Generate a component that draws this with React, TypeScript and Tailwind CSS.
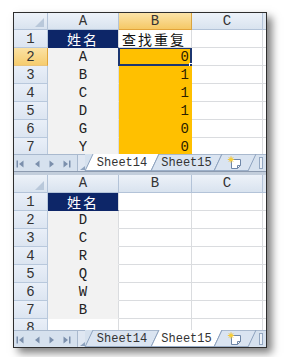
import React from "react";

const MONO = "font-['Liberation_Mono','DejaVu_Sans_Mono',monospace]";
const CJK = "font-['Noto_Sans_CJK_SC','Noto_Sans',sans-serif]";

type Kind = "navy" | "grey" | "orange" | "white";

type CellSpec = {
  kind: Kind;
  text?: string;
  align?: "center" | "left" | "right";
  cjk?: boolean;
  selected?: boolean;
};

const KIND: Record<Kind, string> = {
  navy: "bg-[#0d2668] text-white border-b-[#0d2668] border-r-[#dadcdf]",
  grey: "bg-[#f2f2f2] text-[#222] border-b-[#f2f2f2] border-r-[#dadcdf]",
  orange: "bg-[#ffc000] text-[#2a1e00] border-b-[#ffc000] border-r-[#ffc000]",
  white: "bg-white text-[#111] border-[#dadcdf]",
};

const ALIGN = {
  center: "justify-center",
  left: "justify-start pl-[3px]",
  right: "justify-end pr-[2px]",
};

const WIDTHS = ["w-[71px]", "w-[73px]", "w-[71px]"];

const ROW_H: Record<number, string> = {
  18: "h-[18px]",
  16: "h-[16px]",
  11: "h-[11px]",
};

function Cell({ spec, width }: { spec: CellSpec; width: string }) {
  const font = spec.cjk
    ? `${CJK} text-[14px] leading-[14px] tracking-[2px]`
    : `${MONO} text-[14px] leading-[16px]`;
  return (
    <div
      className={`relative flex h-full items-center border-r border-b ${width} ${KIND[spec.kind]} ${ALIGN[spec.align ?? "center"]} ${font}`}
    >
      {spec.text}
      {spec.selected && (
        <>
          <div className="absolute -left-[1px] -top-[1px] -right-[1px] -bottom-[1px] border-2 border-[#1c3670]" />
          <div className="absolute -right-[3px] -bottom-[3px] h-[5px] w-[5px] border border-white bg-[#1c3670]" />
        </>
      )}
    </div>
  );
}

function Row({ n, cells, h = 18, hl }: { n: number; cells: CellSpec[]; h?: number; hl?: boolean }) {
  return (
    <div className={`overflow-hidden ${ROW_H[h]}`}>
      <div className="flex h-[18px]">
        <div
          className={`flex w-[34px] items-center justify-center border-r border-b ${MONO} text-[14px] leading-[16px] text-[#333] ${
            hl
              ? "border-r-[#e0a63a] border-b-[#e9c47c] bg-[linear-gradient(#fbe2a4,#f6cc6e)]"
              : "border-[#b8c8dc] bg-[linear-gradient(#e9eff8,#dce5f1)]"
          }`}
        >
          {n}
        </div>
        {cells.map((c, i) => (
          <Cell key={i} spec={c} width={WIDTHS[i]} />
        ))}
        <div className="flex-1 border-b border-[#dadcdf] bg-white" />
      </div>
    </div>
  );
}

function HeaderRow({ selB, tall }: { selB?: boolean; tall?: boolean }) {
  const base = `flex items-center justify-center border-r border-b ${MONO} text-[14px] leading-[15px] text-[#333]`;
  const normal = "border-[#b3c3d8] bg-[linear-gradient(#edf2f9,#d9e3ef)]";
  const gold = "border-r-[#d9a440] border-b-[#e2a43a] bg-[linear-gradient(#fbe3a8,#f5c865)]";
  return (
    <div className={`flex ${tall ? "h-[18px]" : "h-[17px]"}`}>
      <div className={`relative w-[34px] ${base} ${normal}`}>
        <svg className="absolute bottom-[2px] right-[3px]" width="9" height="9" viewBox="0 0 9 9">
          <path d="M9 0V9H0Z" fill="#b9c8da" />
        </svg>
      </div>
      <div className={`w-[71px] ${base} ${normal}`}>A</div>
      <div className={`w-[73px] ${base} ${selB ? gold : normal}`}>B</div>
      <div className={`w-[71px] ${base} ${normal}`}>C</div>
      <div className={`flex-1 border-b border-[#b3c3d8] bg-[#dfe7f1]`} />
    </div>
  );
}

const NAV = "#7b8fac";

function NavIcons() {
  return (
    <div className="flex w-[63px] items-center border-t border-[#a9b9ce] pl-[2px] pt-[1px]">
      <svg width="8" height="8" viewBox="0 0 8 8">
        <rect x="0.5" y="0.5" width="1.5" height="7" fill={NAV} />
        <path d="M7.5 0.5v7L3 4z" fill={NAV} />
      </svg>
      <svg className="ml-[9px]" width="8" height="8" viewBox="0 0 8 8">
        <path d="M6.5 0.5v7L2 4z" fill={NAV} />
      </svg>
      <svg className="ml-[7px]" width="8" height="8" viewBox="0 0 8 8">
        <path d="M1.5 0.5v7L6 4z" fill={NAV} />
      </svg>
      <svg className="ml-[7px]" width="8" height="8" viewBox="0 0 8 8">
        <path d="M0.5 0.5v7L5 4z" fill={NAV} />
        <rect x="6" y="0.5" width="1.5" height="7" fill={NAV} />
      </svg>
    </div>
  );
}

const SLANT = 8;

function Tab({
  w,
  width,
  active,
  label,
  insert,
}: {
  w: number;
  width: string;
  active?: boolean;
  label?: string;
  insert?: boolean;
}) {
  const s = SLANT;
  return (
    <div className={`relative h-full ${width}`}>
      <svg className="absolute left-0 top-0 overflow-visible" width={w} height="17">
        <polygon points={`0,17 ${s},0 ${w + s},0 ${w},17`} fill={active ? "#ffffff" : "#dae4f1"} />
        {!active && <line x1={s} y1="0.5" x2={w + s} y2="0.5" stroke="#a9b9ce" />}
        <line x1="0" y1="16.5" x2={w} y2="16.5" stroke="#9cafc8" />
        <line x1="0" y1="17" x2={s} y2="0" stroke="#8ea3bf" />
        <line x1={w} y1="17" x2={w + s} y2="0" stroke="#8ea3bf" />
      </svg>
      <div className="relative flex h-full items-center justify-center pl-[8px] pt-[1px]">
        {label && <span className={`${MONO} text-[12px] leading-none text-[#333]`}>{label}</span>}
        {insert && (
          <svg width="17" height="14" viewBox="0 0 17 14">
            <path d="M4.5 3.5h9v6l-3 3h-6z" fill="#fff" stroke="#6f87a8" />
            <path d="M13.5 9.5h-3v3" fill="none" stroke="#6f87a8" />
            <path d="M4 0.3v6.4M0.8 3.5h6.4M1.8 1.3l4.4 4.4M6.2 1.3l-4.4 4.4" stroke="#f2c230" strokeWidth="0.9" />
            <circle cx="4" cy="3.5" r="1.8" fill="#f7cf3a" />
          </svg>
        )}
      </div>
    </div>
  );
}

function TabBar({ active }: { active: 0 | 1 }) {
  return (
    <div className="flex h-[17px] bg-[#d6e1ee]">
      <NavIcons />
      <div className="relative w-[8px] border-t border-l border-[#a9b9ce] bg-[#dfe7f2]">
        <svg className="absolute bottom-[1px] right-[0px]" width="5" height="4" viewBox="0 0 5 4">
          <path d="M0 4L5 4L5 0Z" fill="#8ea3bf" />
        </svg>
      </div>
      <Tab w={66} width="w-[66px]" label="Sheet14" active={active === 0} />
      <Tab w={63} width="w-[63px]" label="Sheet15" active={active === 1} />
      <Tab w={34} width="w-[34px]" insert />
      <div className="flex flex-1 items-center justify-end border-t border-[#a9b9ce] pr-[3px]">
        <div className="h-[12px] w-[4px] border border-[#93a7c1] bg-[#eef3f9]" />
      </div>
    </div>
  );
}

const W: CellSpec = { kind: "white" };

const PANE1: { n: number; cells: CellSpec[]; hl?: boolean; h?: number }[] = [
  {
    n: 1,
    cells: [
      { kind: "navy", text: "姓名", cjk: true },
      { kind: "white", text: "查找重复", cjk: true, align: "left" },
      W,
    ],
  },
  ...[
    ["A", "0"],
    ["B", "1"],
    ["C", "1"],
    ["D", "1"],
    ["G", "0"],
    ["Y", "0"],
  ].map(([a, b], i) => ({
    n: i + 2,
    hl: i === 0,
    h: i === 5 ? 16 : 18,
    cells: [
      { kind: "grey" as Kind, text: a },
      { kind: "orange" as Kind, text: b, align: "right" as const, selected: i === 0 },
      W,
    ],
  })),
];

const PANE2: { n: number; cells: CellSpec[]; h?: number }[] = [
  { n: 1, cells: [{ kind: "navy", text: "姓名", cjk: true }, W, W] },
  ...["D", "C", "R", "Q", "W", "B"].map((a, i) => ({
    n: i + 2,
    cells: [{ kind: "grey" as Kind, text: a }, W, W],
  })),
  { n: 8, h: 11, cells: [W, W, W] },
];

export default function App() {
  return (
    <div className="h-[357px] w-[289px] bg-white pl-[13px] pt-[12px]">
      <div className="w-[254px] border border-[#2e2e2e] bg-white shadow-[5px_5px_8px_rgba(0,0,0,0.5)]">
        <HeaderRow selB />
        {PANE1.map((r) => (
          <Row key={r.n} n={r.n} cells={r.cells} hl={r.hl} h={r.h} />
        ))}
        <TabBar active={0} />
        <div className="h-[4px] border-t border-[#8d9bb0] bg-[#c3cedc]" />
        <HeaderRow tall />
        {PANE2.map((r) => (
          <Row key={r.n} n={r.n} cells={r.cells} h={r.h} />
        ))}
        <TabBar active={1} />
      </div>
    </div>
  );
}
